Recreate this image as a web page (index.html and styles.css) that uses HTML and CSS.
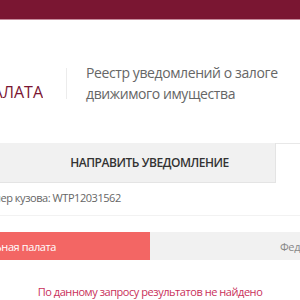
FILE: index.html
```html
<!DOCTYPE html>
<html lang="ru">
<head>
    <meta charset="UTF-8">
    <meta name="viewport" content="width=device-width, initial-scale=1.0">
    <title>Реестр уведомлений о залоге движимого имущества</title>
    <link rel="stylesheet" href="styles.css">
</head>
<body>

    <div class="topbar"></div>

    <div class="brand">
        <div class="logo"><span>Нотариальная палата</span></div>
        <div class="divider"></div>
        <div class="title">Реестр уведомлений о залоге<br>движимого имущества</div>
    </div>

    <div class="tabs">
        <div class="tab">Направить уведомление</div>
        <div class="tab-rest"></div>
    </div>

    <p class="meta">Номер кузова: WTP12031562</p>

    <div class="sources">
        <div class="source active"><span>Федеральная нотариальная палата</span></div>
        <div class="source"><span>Федеральная налоговая служба</span></div>
    </div>

    <div class="empty">По данному запросу результатов не найдено</div>

</body>
</html>
```

FILE: styles.css
```css
body {
    font-family: "Open Sans", Arial, sans-serif;
    margin: 0;
    background: white;
}
.topbar {
    height: 19px;
    background-color: #7a1632;
    border-bottom: 1px solid #c58b9c;
}
.brand {
    display: flex;
    align-items: center;
    padding-top: 42px;
}
.logo {
    width: 43px;
    flex-shrink: 0;
    display: flex;
    justify-content: flex-end;
    overflow: hidden;
    white-space: nowrap;
    color: #7b1533;
    font-size: 16px;
    text-transform: uppercase;
    padding-top: 18px;
    line-height: 22px;
}
.divider {
    width: 1px;
    height: 31px;
    background: #ececec;
    margin: 0 19px 0 23px;
    flex-shrink: 0;
}
.title {
    color: #666;
    font-size: 14px;
    letter-spacing: -0.4px;
    line-height: 21px;
    white-space: nowrap;
}
.tabs {
    display: flex;
    margin-top: 39px;
}
.tab {
    width: 276px;
    height: 40px;
    flex-shrink: 0;
    box-sizing: border-box;
    background: #f1f1f1;
    border-right: 1px solid #e4e4e4;
    border-bottom: 1px solid #e4e4e4;
    display: flex;
    align-items: center;
    justify-content: center;
    padding-left: 24px;
    color: #333;
    font-size: 12px;
    letter-spacing: -0.45px;
    font-weight: 600;
    text-transform: uppercase;
}
.tab-rest {
    flex: 1;
    border-top: 1px solid #e8e8e8;
}
.meta {
    margin: 7px 0 0 -21px;
    font-size: 11px;
    letter-spacing: -0.45px;
    line-height: 16px;
    color: #666;
    padding-bottom: 9px;
    border-bottom: 1px solid #f2f2f2;
}
.sources {
    display: flex;
    height: 28px;
    margin-top: 16px;
    overflow: hidden;
}
.source {
    width: 150px;
    flex-shrink: 0;
    box-sizing: border-box;
    display: flex;
    align-items: center;
    overflow: hidden;
    white-space: nowrap;
    font-size: 11px;
    letter-spacing: -0.4px;
    background: #f1f1f1;
    color: #888;
    padding-left: 130px;
}
.source.active {
    background: #f36664;
    color: white;
    justify-content: flex-end;
    padding: 0 94px 0 0;
}
.empty {
    margin-top: 24px;
    text-align: center;
    font-size: 11px;
    letter-spacing: -0.45px;
    line-height: 16px;
    color: #c9305a;
}
```
